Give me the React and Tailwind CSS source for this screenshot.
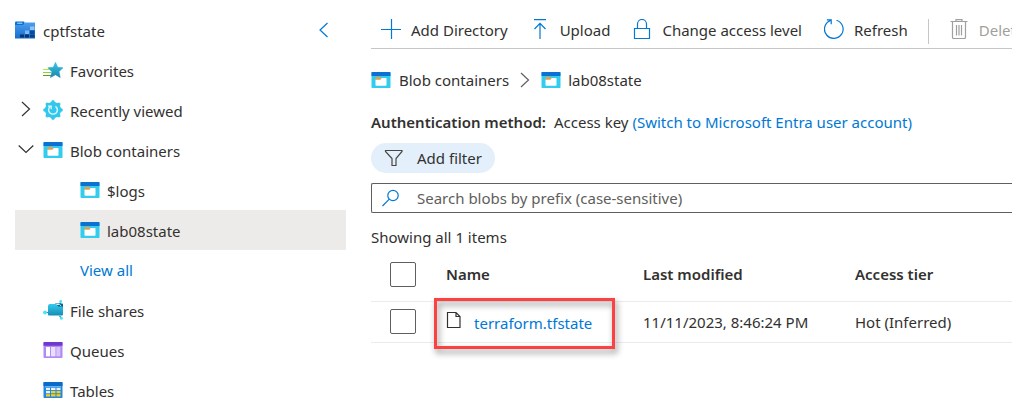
import React from "react";

function AccountIcon() {
  return (
    <svg width="20" height="18" viewBox="0 0 20 18" className="shrink-0" aria-hidden="true">
      <defs>
        <linearGradient id="acct" x1="0" y1="0" x2="0" y2="1">
          <stop offset="0" stopColor="#4f9dee" />
          <stop offset="1" stopColor="#0f6fd0" />
        </linearGradient>
      </defs>
      <path d="M0 1.500Q0 .5 1 .5h7.500q1 0 1 1V4H0z" fill="#0a6fd0" />
      <rect x="2" y="1.500" width="5.500" height="1.500" rx=".7" fill="#7cc4ff" />
      <path d="M0 4h8l2-2.500h10V17.500H0z" fill="url(#acct)" />
      <rect x="5" y="13.500" width="4" height="3" fill="#0b2f6b" />
      <rect x="10" y="13.500" width="4" height="3" fill="#0b2f6b" />
      <rect x="15" y="13.500" width="4.500" height="3" fill="#0b3f80" />
      <rect x="10" y="9.500" width="4" height="3.500" fill="#7fb8f6" />
      <rect x="15" y="9.500" width="4.500" height="3.500" fill="#0a4a9c" />
      <rect x="15" y="5.500" width="4.500" height="3.500" fill="#8fc3fa" />
    </svg>
  );
}

function FavoritesIcon() {
  return (
    <svg width="20" height="18" viewBox="0 0 20 18" className="shrink-0" aria-hidden="true">
      <defs>
        <linearGradient id="star" x1="0" y1="0" x2="0" y2="1">
          <stop offset="0" stopColor="#35c5e8" />
          <stop offset="1" stopColor="#1b86ae" />
        </linearGradient>
      </defs>
      <path d="M0 8.500h8" stroke="#b4ec36" />
      <path d="M0 11.500h8" stroke="#86d633" />
      <path d="M0 14.500h8" stroke="#5e9624" />
      <path d="M12.500 1.200l2.200 5.100 5.300.5-4 3.800 1.200 5.900-4.700-2.800-5 2.800 1.400-5.900-4-3.800 5.400-.5z" fill="url(#star)" stroke="url(#star)" strokeWidth=".6" strokeLinejoin="round" />
    </svg>
  );
}

function RecentIcon() {
  return (
    <svg width="20" height="20" viewBox="0 0 20 20" className="shrink-0" aria-hidden="true">
      <circle cx="10" cy="10" r="8" fill="#32c8ee" />
      <g fill="#32c8ee">
        <path d="M7.500 3L9 .3h2L12.500 3z" />
        <path d="M7.500 3L9 .3h2L12.500 3z" transform="rotate(45 10 10)" />
        <path d="M7.500 3L9 .3h2L12.500 3z" transform="rotate(90 10 10)" />
        <path d="M7.500 3L9 .3h2L12.500 3z" transform="rotate(135 10 10)" />
        <path d="M7.500 3L9 .3h2L12.500 3z" transform="rotate(180 10 10)" />
        <path d="M7.500 3L9 .3h2L12.500 3z" transform="rotate(225 10 10)" />
        <path d="M7.500 3L9 .3h2L12.500 3z" transform="rotate(270 10 10)" />
        <path d="M7.500 3L9 .3h2L12.500 3z" transform="rotate(315 10 10)" />
      </g>
      <path d="M7.200 6.500C5.900 7.500 5.400 9 5.700 10.700c.5 2 2.200 3.400 4.300 3.400s3.900-1.400 4.300-3.400c.3-1.800-.4-3.300-1.800-4.300" fill="none" stroke="#e3f9ff" strokeWidth="1.400" />
      <path d="M5 6.200h3.200v3" fill="none" stroke="#e3f9ff" strokeWidth="1.200" />
    </svg>
  );
}

function ContainerIcon() {
  return (
    <svg width="20" height="18" viewBox="0 0 20 18" className="shrink-0" aria-hidden="true">
      <rect x=".5" y="1" width="19" height="16" rx=".7" fill="#32cdee" />
      <path d="M.5 5V1.700Q.5 1 1.200 1h17.600q.7 0 .7.700V5z" fill="#0b72d3" />
      <path d="M4.500 8.500h5l1-1.500H15q.5 0 .5.500V14q0 .8-.8.8H5.300q-.8 0-.8-.8z" fill="#fff" />
      <path d="M4.500 8.500V6.400q0-.4.400-.4h4.300l1.300 1-1 1.500z" fill="#f59b35" />
    </svg>
  );
}

function FileShareIcon() {
  return (
    <svg width="20" height="20" viewBox="0 0 20 20" className="shrink-0" aria-hidden="true">
      <defs>
        <linearGradient id="share" x1="0" y1="0" x2="0" y2="1">
          <stop offset="0" stopColor="#32cbed" />
          <stop offset="1" stopColor="#198cb3" />
        </linearGradient>
      </defs>
      <path d="M2 12.500h4M16.500 5l1.200-3M16.500 16l2 2" stroke="#2096bf" strokeWidth="1.200" />
      <path d="M12 3.500h7q1 0 1 1V8h-5z" fill="#0d5c8c" />
      <path d="M13 4.500h3.500l1.700 1.500" fill="none" stroke="#c6f1ff" strokeWidth="1" />
      <path d="M5 6q0-2 2-2h6l2.500 2.500H19q1 0 1 1V14.500q0 1-1 1H6q-1 0-1-1z" fill="url(#share)" />
      <circle cx="2" cy="12.500" r="2" fill="#50e1ff" />
      <circle cx="17.700" cy="1.500" r="1.400" fill="#50e1ff" />
      <circle cx="18.400" cy="18.300" r="1.500" fill="#50e1ff" />
    </svg>
  );
}

function QueueIcon() {
  return (
    <svg width="20" height="18" viewBox="0 0 20 18" className="shrink-0" aria-hidden="true">
      <rect x=".5" y="1" width="19" height="16" rx=".7" fill="#b28af3" />
      <path d="M.5 4.700v-3Q.5 1 1.200 1h17.600q.7 0 .7.700v3z" fill="#6f38cf" />
      <rect x="3" y="6" width="4" height="9.300" fill="#fff" />
      <rect x="8" y="6" width="4.500" height="9.300" fill="#eadffd" />
      <rect x="13.300" y="6" width="4" height="9.300" fill="#d8c4fa" />
    </svg>
  );
}

function TableIcon() {
  return (
    <svg width="20" height="18" viewBox="0 0 20 18" className="shrink-0" aria-hidden="true">
      <rect x=".5" y="1" width="19" height="16" rx=".7" fill="#2487df" />
      <path d="M.5 5V1.700Q.5 1 1.200 1h17.600q.7 0 .7.700V5z" fill="#0a6bc9" />
      <path d="M2 5.200h16v1H2z" fill="#7dbdf5" />
      <g fill="#e5f5ff">
        <rect x="3" y="6.800" width="4" height="2.300" />
        <rect x="8" y="6.800" width="4.500" height="2.300" />
        <rect x="13.500" y="6.800" width="4" height="2.300" />
        <rect x="3" y="10" width="4" height="2.300" />
      </g>
      <g fill="#f5cf16">
        <rect x="8" y="10" width="4.500" height="2.300" />
        <rect x="13.500" y="10" width="4" height="2.300" />
        <rect x="3" y="13.200" width="4" height="2.300" />
        <rect x="8" y="13.200" width="4.500" height="2.300" />
        <rect x="13.500" y="13.200" width="4" height="2.300" />
      </g>
    </svg>
  );
}

function Chevron({ d, className }) {
  return (
    <svg width="16" height="16" viewBox="0 0 16 16" className={className} fill="none" stroke="currentColor" strokeWidth="1.200" aria-hidden="true">
      <path d={d} />
    </svg>
  );
}

const RIGHT = "M4 1l7.500 7L4 15";
const DOWN = "M.7 4.500L8 11.500l7.300-7";
const LEFT = "M11.500 1L4 8l7.500 7";

function ToolIcon({ children, className = "text-[#0078d4]" }) {
  return (
    <svg width="20" height="20" viewBox="0 0 20 20" className={`shrink-0 ${className}`} fill="none" stroke="currentColor" strokeWidth="1.200" aria-hidden="true">
      {children}
    </svg>
  );
}

function TreeRow({ icon, label, chevron }) {
  return (
    <li className="flex h-10 items-center pl-[3px]">
      <button type="button" className="flex items-center text-left">
        <span className="flex w-[25px] shrink-0">
          {chevron && <Chevron d={chevron} className="-mt-0.5 shrink-0" />}
        </span>
        {icon}
        <span className="pt-0.5 pl-[7px]">{label}</span>
      </button>
    </li>
  );
}

function ContainerRow({ label, selected }) {
  return (
    <li className={selected ? "bg-[#edebe9]" : ""}>
      <a href="#container" className="flex h-10 items-center pl-[65px]">
        <ContainerIcon />
        <span className="pt-0.5 pl-[7px]">{label}</span>
      </a>
    </li>
  );
}

function Sidebar() {
  return (
    <nav aria-label="Storage account" className="w-[331px] shrink-0">
      <div className="flex h-10 items-center justify-between pr-3.5">
        <span className="flex items-center gap-2">
          <AccountIcon />
          <span className="pt-0.5">cptfstate</span>
        </span>
        <button type="button" aria-label="Collapse" className="text-[#0078d4]">
          <Chevron d={LEFT} />
        </button>
      </div>
      <ul>
        <TreeRow icon={<FavoritesIcon />} label="Favorites" />
        <TreeRow icon={<RecentIcon />} label="Recently viewed" chevron={RIGHT} />
        <TreeRow icon={<ContainerIcon />} label="Blob containers" chevron={DOWN} />
        <ContainerRow label="$logs" />
        <ContainerRow label="lab08state" selected />
        <li>
          <a href="#all" className="flex h-10 items-center pl-[65px] text-[#0078d4]">View all</a>
        </li>
        <TreeRow icon={<FileShareIcon />} label="File shares" />
        <TreeRow icon={<QueueIcon />} label="Queues" />
        <TreeRow icon={<TableIcon />} label="Tables" />
      </ul>
    </nav>
  );
}

function ToolButton({ icon, label, disabled }) {
  return (
    <button type="button" disabled={disabled} className="flex shrink-0 items-center gap-2.5 whitespace-nowrap disabled:text-[#a19f9d]">
      {icon}
      <span className="pt-0.5">{label}</span>
    </button>
  );
}

function Toolbar() {
  return (
    <div role="toolbar" aria-label="Blob actions" className="flex h-[39px] items-center gap-5 overflow-hidden border-b border-[#c8c6c4] pl-2.5">
      <div className="flex shrink-0 items-center gap-[22px]">
        <ToolButton label="Add Directory" icon={<ToolIcon><path d="M10.500 0v20M0 10.500h20" /></ToolIcon>} />
        <ToolButton label="Upload" icon={<ToolIcon><path d="M4 .7h12M10 20V4.500M4.500 10L10 4.300l5.500 5.700" /></ToolIcon>} />
        <ToolButton
          label="Change access level"
          icon={<ToolIcon><path d="M2.500 9.500h15v10h-15zM5.500 9.500V5a4.500 4.500 0 0 1 9 0v4.500" /></ToolIcon>}
        />
        <ToolButton
          label="Refresh"
          icon={<ToolIcon><path d="M12.500 1.200A9.300 9.300 0 1 1 5.800 1.700M2.800.8h4.400v4.400M7.200.8L4.500 2.800" /></ToolIcon>}
        />
      </div>
      <span className="mt-1 h-[25px] w-px shrink-0 bg-[#c8c6c4]" />
      <ToolButton
        disabled
        label="Delete"
        icon={
          <ToolIcon className="text-[#a19f9d]">
            <path d="M1.500 2.500h17M7 2.500V.6h6v1.900M3.500 2.500v15.700q0 1.300 1.300 1.300h10.400q1.300 0 1.300-1.300V2.500M7.500 6v10.500M10 6v10.500M12.500 6v10.500" />
          </ToolIcon>
        }
      />
    </div>
  );
}

function Breadcrumb() {
  return (
    <nav aria-label="Breadcrumb" className="flex h-[61px] items-center">
      <a href="#containers" className="flex items-center gap-2">
        <ContainerIcon />
        Blob containers
      </a>
      <Chevron d={RIGHT} className="mx-2 shrink-0 text-[#605e5c]" />
      <span className="flex items-center gap-[7px]">
        <ContainerIcon />
        lab08state
      </span>
    </nav>
  );
}

function CheckBox({ label }) {
  return (
    <input type="checkbox" aria-label={label} className="block h-[25px] w-[26px] appearance-none rounded-xs border border-[#605e5c] bg-white checked:bg-[#0078d4]" />
  );
}

function BlobTable() {
  return (
    <table className="mt-px w-full table-fixed border-collapse text-left">
      <colgroup>
        <col className="w-[75px]" />
        <col className="w-[197px]" />
        <col className="w-[212px]" />
        <col />
      </colgroup>
      <thead>
        <tr className="h-[53px] border-b border-[#edebe9] whitespace-nowrap">
          <th className="pl-[19px]"><CheckBox label="Select all" /></th>
          <th className="font-semibold">Name</th>
          <th className="font-semibold">Last modified</th>
          <th className="font-semibold">Access tier</th>
        </tr>
      </thead>
      <tbody>
        <tr className="h-[41px] border-b border-[#edebe9] whitespace-nowrap">
          <td className="pl-[19px]"><CheckBox label="Select terraform.tfstate" /></td>
          <td className="relative">
            <a href="#blob" className="flex items-center gap-3 text-[#0078d4]">
              <svg width="16" height="18" viewBox="0 0 16 18" className="-mt-1 shrink-0" fill="none" stroke="#323130" strokeWidth="1.200" aria-hidden="true">
                <path d="M1.500 1.500h8.500l4 4v11H1.500zM10 1.500V5.500h4" />
              </svg>
              <span className="pt-0.5">terraform.tfstate</span>
            </a>
            <span className="pointer-events-none absolute -top-1 -left-3 h-[51px] w-[181px] border-3 border-[#fb4141] drop-shadow-[2px_4px_3px_rgba(0,0,0,0.45)]" />
          </td>
          <td>11/11/2023, 8:46:24 PM</td>
          <td>Hot (Inferred)</td>
        </tr>
      </tbody>
    </table>
  );
}

export default function App() {
  return (
    <div className="flex min-h-screen gap-[25px] overflow-hidden bg-white pt-2.5 pl-[15px] font-['Noto_Sans',sans-serif] text-[15px] leading-5 text-[#323130]">
      <Sidebar />
      <main className="min-w-0 flex-1">
        <Toolbar />
        <Breadcrumb />
        <p className="flex h-6 items-center gap-2 whitespace-nowrap">
          <strong className="font-semibold">Authentication method:</strong>
          <span>
            Access key <a href="#switch" className="text-[#0078d4]">(Switch to Microsoft Entra user account)</a>
          </span>
        </p>
        <button type="button" className="mt-[9px] flex h-[30px] items-center gap-[13px] rounded-full bg-[#e3f0fb] px-[13px]">
          <svg width="20" height="18" viewBox="0 0 20 18" fill="none" stroke="#484644" strokeWidth="1.200" aria-hidden="true">
            <path d="M1.500 1.500h16.500v1L12 9.500v7H8v-7L1.500 2.500z" />
          </svg>
          Add filter
        </button>
        <label className="mt-2.5 flex h-[30px] items-center gap-[17px] rounded-l-xs border border-r-0 border-[#605e5c] pl-2.5">
          <svg width="18" height="18" viewBox="0 0 18 18" className="shrink-0" fill="none" stroke="#0078d4" strokeWidth="1.200" aria-hidden="true">
            <circle cx="11" cy="6.500" r="5.200" />
            <path d="M7.300 10.200L.5 17" />
          </svg>
          <input type="search" aria-label="Search blobs" placeholder="Search blobs by prefix (case-sensitive)" className="min-w-0 flex-1 bg-transparent outline-none placeholder:text-[#605e5c]" />
        </label>
        <p className="mt-3.5">Showing all 1 items</p>
        <BlobTable />
      </main>
    </div>
  );
}
